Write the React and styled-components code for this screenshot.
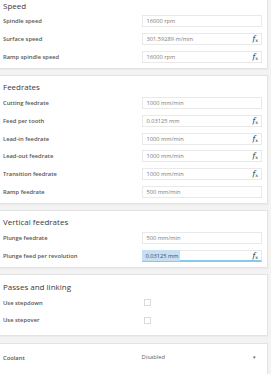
// Operation parameters panel
// cards of labelled fields (speed, feedrates, passes, coolant)

import React from 'react';
import styled, {createGlobalStyle} from 'styled-components';

const GlobalStyle = createGlobalStyle`
  html, body {
    margin: 0;
    padding: 0;
    background: #f3f3f3;
    overflow: hidden;
  }
  body {
    font-family: "Open Sans", "Noto Sans", sans-serif;
  }
`

const sections = [
  {
    title: 'Speed',
    rows: [
      {label: 'Spindle speed', value: '16000 rpm'},
      {label: 'Surface speed', value: '301.59289 m/min', fx: true},
      {label: 'Ramp spindle speed', value: '16000 rpm', fx: true}
    ]
  },
  {
    title: 'Feedrates',
    rows: [
      {label: 'Cutting feedrate', value: '1000 mm/min'},
      {label: 'Feed per tooth', value: '0.03125 mm', fx: true},
      {label: 'Lead-in feedrate', value: '1000 mm/min', fx: true},
      {label: 'Lead-out feedrate', value: '1000 mm/min', fx: true},
      {label: 'Transition feedrate', value: '1000 mm/min', fx: true},
      {label: 'Ramp feedrate', value: '500 mm/min'}
    ]
  },
  {
    title: 'Vertical feedrates',
    rows: [
      {label: 'Plunge feedrate', value: '500 mm/min'},
      {label: 'Plunge feed per revolution', value: '0.03125 mm', fx: true, focused: true}
    ]
  },
  {
    title: 'Passes and linking',
    // checkbox card has a bit more room below the last row
    tall: true,
    rows: [
      {label: 'Use stepdown', checkbox: true},
      {label: 'Use stepover', checkbox: true}
    ]
  }
];

function FieldRow({row}) {
  if (row.checkbox) {
    return (<Row>
      <Label>{row.label}</Label>
      <Checkbox />
    </Row>);
  }
  return (<Row>
    <Label>{row.label}</Label>
    <Field focused={row.focused}>
      {row.focused
        ? <Selected>{row.value}</Selected>
        : <span>{row.value}</span>}
      {row.fx && <Fx>f<sub>x</sub></Fx>}
    </Field>
  </Row>);
}

export default function App() {
  return (<>
    <GlobalStyle />
    <Panel>
      {sections.map(section => <Card key={section.title} tall={section.tall}>
        <Title>{section.title}</Title>
        {section.rows.map(row => <FieldRow key={row.label} row={row} />)}
      </Card>)}
      <Card untitled>
        <Row>
          <Label>Coolant</Label>
          <Select>
            <span>Disabled</span>
            <Caret>▾</Caret>
          </Select>
        </Row>
        <Row />
      </Card>
    </Panel>
  </>);
}

const Panel = styled.div `
  display: flex;
  flex-direction: column;
  gap: 6.4px;
  margin-top: -7px;
  padding-right: 3px;
`

const Card = styled.section `
  background: #fff;
  border: 1px solid #e3e3e3;
  border-left: none;
  padding: ${props => props.untitled ? '6px' : '4.5px'} 5px ${props => props.tall ? '6px' : '2px'} 3px;
  box-shadow: 0 1px 1px rgba(0, 0, 0, 0.03);
`

const Title = styled.h3 `
  margin: 0;
  font-size: 8px;
  line-height: 14px;
  font-weight: 400;
  color: #3a3a3a;
`

const Row = styled.div `
  display: grid;
  grid-template-columns: 138.5px 1fr;
  align-items: center;
  height: 17.7px;
`

const Label = styled.span `
  font-size: 5.8px;
  font-weight: 600;
  color: #555;
  white-space: nowrap;
`

const Field = styled.div `
  height: 12px;
  box-sizing: border-box;
  display: flex;
  align-items: center;
  justify-content: space-between;
  padding: 0 3px 0 ${props => props.focused ? '0' : '4px'};
  border: 1px solid #e9e9e9;
  ${props => props.focused && 'border-bottom: 2px solid #86c9ec; border-left: none;'}
  background: #fff;
  font-size: 5.7px;
  color: #7a7a7a;
  white-space: nowrap;
`

const Selected = styled.span `
  background: #c6dff2;
  color: #4a4a4a;
  padding: 1.5px 1.5px 1.5px 4px;
`

const Fx = styled.span `
  font-family: "DejaVu Serif", "Liberation Serif", serif;
  font-style: italic;
  font-size: 7.5px;
  color: #222;
  line-height: 1;

  sub {
    font-size: 5px;
    vertical-align: -1px;
  }
`

const Checkbox = styled.span `
  width: 5px;
  height: 5px;
  border: 1px solid #dadada;
  margin-left: 2px;
`

const Select = styled.div `
  display: flex;
  align-items: center;
  justify-content: space-between;
  padding: 0 6px 2px 0;
  font-size: 5.8px;
  color: #666;
`

const Caret = styled.span `
  font-size: 5px;
  color: #666;
`
